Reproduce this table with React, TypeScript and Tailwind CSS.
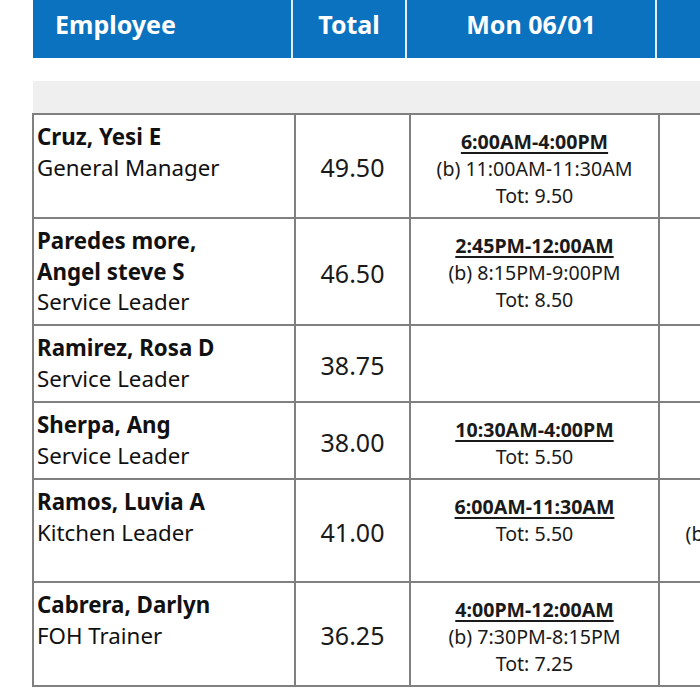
import React from "react";

type Shift = { time: string; brk?: string; tot: string };

type Row = {
  name: string[];
  role: string;
  total: string;
  height: string;
  mon?: Shift;
  tue?: Shift;
};

const rows: Row[] = [
  {
    name: ["Cruz, Yesi E"],
    role: "General Manager",
    total: "49.50",
    height: "h-[104px]",
    mon: { time: "6:00AM-4:00PM", brk: "(b) 11:00AM-11:30AM", tot: "9.50" },
  },
  {
    name: ["Paredes more,", "Angel steve S"],
    role: "Service Leader",
    total: "46.50",
    height: "h-[107px]",
    mon: { time: "2:45PM-12:00AM", brk: "(b) 8:15PM-9:00PM", tot: "8.50" },
  },
  {
    name: ["Ramirez, Rosa D"],
    role: "Service Leader",
    total: "38.75",
    height: "h-[77px]",
  },
  {
    name: ["Sherpa, Ang"],
    role: "Service Leader",
    total: "38.00",
    height: "h-[77px]",
    mon: { time: "10:30AM-4:00PM", tot: "5.50" },
  },
  {
    name: ["Ramos, Luvia A"],
    role: "Kitchen Leader",
    total: "41.00",
    height: "h-[103px]",
    mon: { time: "6:00AM-11:30AM", tot: "5.50" },
    tue: { time: "6:00AM-4:00PM", brk: "(b) 10:00AM-10:30AM", tot: "9.50" },
  },
  {
    name: ["Cabrera, Darlyn"],
    role: "FOH Trainer",
    total: "36.25",
    height: "h-[104px]",
    mon: { time: "4:00PM-12:00AM", brk: "(b) 7:30PM-8:15PM", tot: "7.25" },
  },
];

function ShiftCell({ shift }: { shift?: Shift }) {
  return (
    <div className="w-[249px] shrink-0 border-r-2 border-[#808080] pt-[13px] text-center text-[19.6px] leading-[27px] text-[#1a1a1a]">
      {shift && (
        <>
          <div className="font-bold underline decoration-[1.5px] underline-offset-[3px]">
            {shift.time}
          </div>
          {shift.brk && <div>{shift.brk}</div>}
          <div>Tot: {shift.tot}</div>
        </>
      )}
    </div>
  );
}

export default function App() {
  return (
    <div className="w-[700px] h-[700px] overflow-hidden bg-white font-['Noto_Sans',_'Open_Sans',_sans-serif]">
      {/* Column headers */}
      <div className="ml-[33px] flex h-[58px] w-max bg-[#0b72c0] text-[25px] font-bold text-white">
        <div className="w-[260px] border-r-2 border-[#e3eef8] pl-[22px] pt-[6px]">Employee</div>
        <div className="w-[114px] border-r-2 border-[#e3eef8] pt-[6px] text-center">Total</div>
        <div className="w-[250px] border-r-2 border-[#e3eef8] pt-[6px] text-center">Mon 06/01</div>
        <div className="w-[250px]" />
      </div>

      <div className="ml-[33px] mt-[23px] h-[32px] bg-[#efefef]" />

      {/* Schedule rows */}
      <div className="ml-[32px] w-max border-l-2 border-t-2 border-[#808080]">
        {rows.map((r) => (
          <div key={r.name.join(" ")} className={`flex ${r.height} border-b-2 border-[#808080]`}>
            <div className="w-[262px] shrink-0 border-r-2 border-[#808080] pl-[3px] pt-[7px] text-[22.3px] leading-[30.5px] text-[#111]">
              {r.name.map((n) => (
                <div key={n} className="font-bold">{n}</div>
              ))}
              <div>{r.role}</div>
            </div>
            <div className="flex w-[115px] shrink-0 items-center justify-center border-r-2 border-[#808080] pt-[4px] text-[25px] text-[#1a1a1a]">
              {r.total}
            </div>
            <ShiftCell shift={r.mon} />
            <ShiftCell shift={r.tue} />
          </div>
        ))}
      </div>
    </div>
  );
}
